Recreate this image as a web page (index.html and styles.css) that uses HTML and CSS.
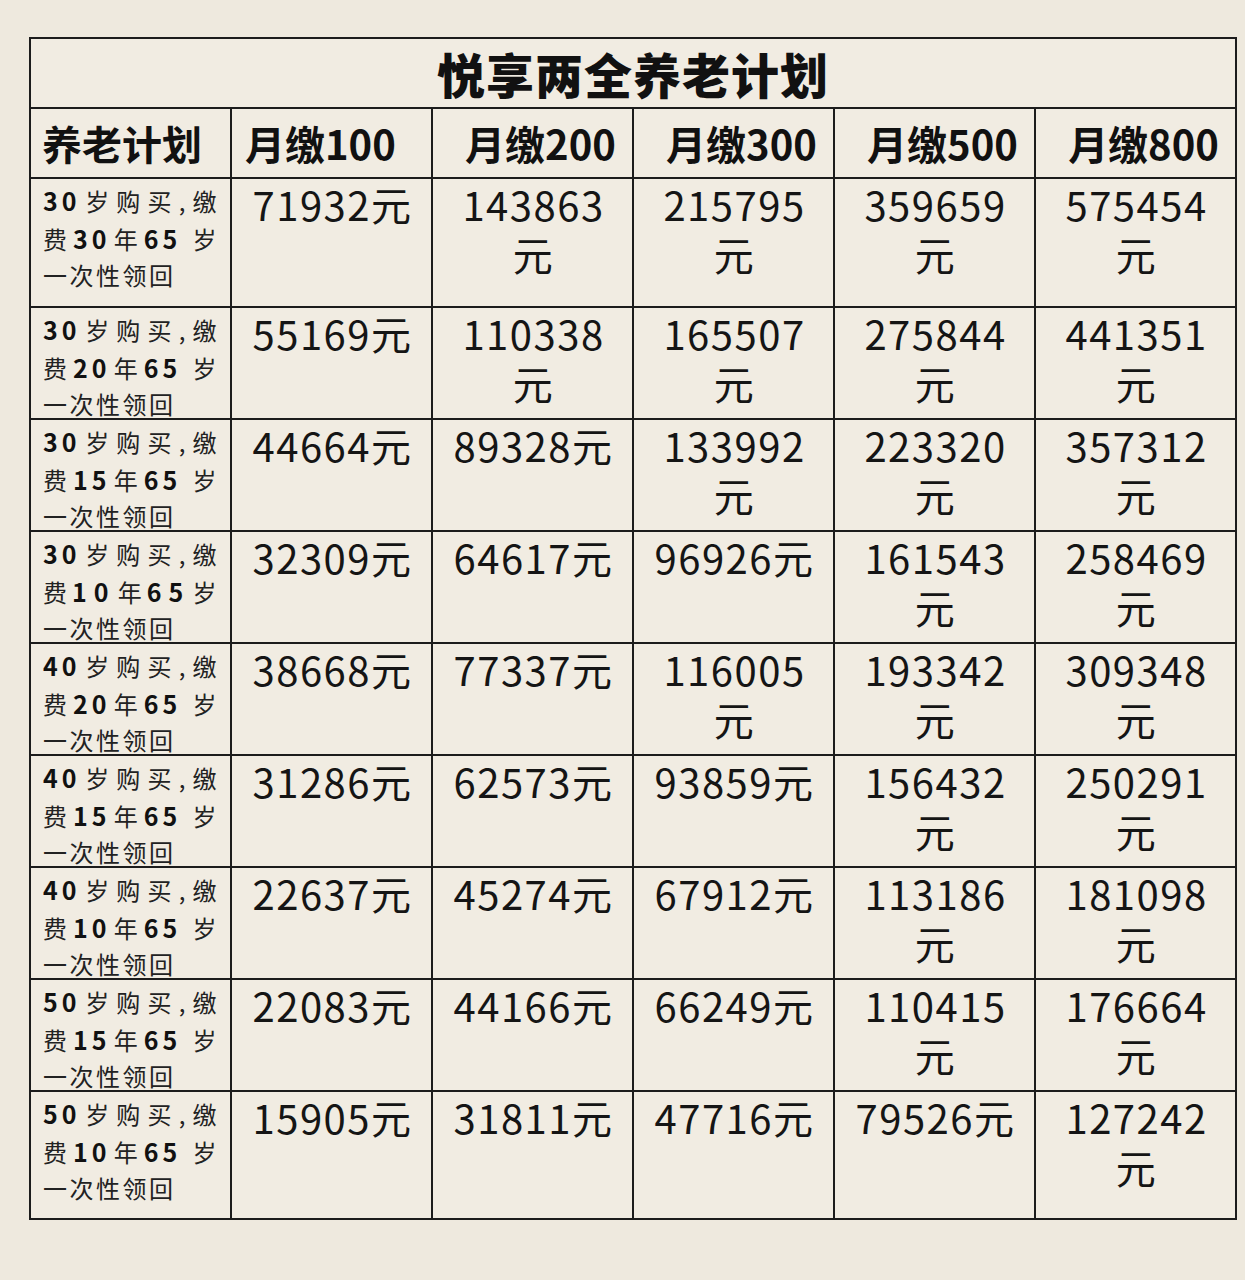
FILE: index.html
```html
<!DOCTYPE html>
<html lang="zh-CN">
<head>
<meta charset="utf-8">
<title>悦享两全养老计划</title>
<link rel="stylesheet" href="styles.css">
</head>
<body>
<table class="plan">
  <colgroup>
    <col class="c0"><col class="c"><col class="c"><col class="c"><col class="c"><col class="c">
  </colgroup>
  <tr class="r-title"><th colspan="6" class="title">悦享两全养老计划</th></tr>
  <tr class="r-head">
    <th class="h0">养老计划</th>
    <th class="h1">月缴100</th>
    <th class="h">月缴200</th>
    <th class="h">月缴300</th>
    <th class="h">月缴500</th>
    <th class="h">月缴800</th>
  </tr>
  <tr class="r-first">
    <td class="lab"><div class="ln j"><b>30</b>岁购买,缴</div><div class="ln j">费<b>30</b>年<b>65</b> 岁</div><div class="ln end">一次性领回</div></td>
    <td class="v">71932元</td><td class="v">143863元</td><td class="v">215795元</td><td class="v">359659元</td><td class="v">575454元</td>
  </tr>
  <tr class="r">
    <td class="lab"><div class="ln j"><b>30</b>岁购买,缴</div><div class="ln j">费<b>20</b>年<b>65</b> 岁</div><div class="ln end">一次性领回</div></td>
    <td class="v">55169元</td><td class="v">110338元</td><td class="v">165507元</td><td class="v">275844元</td><td class="v">441351元</td>
  </tr>
  <tr class="r">
    <td class="lab"><div class="ln j"><b>30</b>岁购买,缴</div><div class="ln j">费<b>15</b>年<b>65</b> 岁</div><div class="ln end">一次性领回</div></td>
    <td class="v">44664元</td><td class="v">89328元</td><td class="v">133992元</td><td class="v">223320元</td><td class="v">357312元</td>
  </tr>
  <tr class="r">
    <td class="lab"><div class="ln j"><b>30</b>岁购买,缴</div><div class="ln j">费<b class="w">10</b>年<b class="w">65</b>岁</div><div class="ln end">一次性领回</div></td>
    <td class="v">32309元</td><td class="v">64617元</td><td class="v">96926元</td><td class="v">161543元</td><td class="v">258469元</td>
  </tr>
  <tr class="r">
    <td class="lab"><div class="ln j"><b>40</b>岁购买,缴</div><div class="ln j">费<b>20</b>年<b>65</b> 岁</div><div class="ln end">一次性领回</div></td>
    <td class="v">38668元</td><td class="v">77337元</td><td class="v">116005元</td><td class="v">193342元</td><td class="v">309348元</td>
  </tr>
  <tr class="r">
    <td class="lab"><div class="ln j"><b>40</b>岁购买,缴</div><div class="ln j">费<b>15</b>年<b>65</b> 岁</div><div class="ln end">一次性领回</div></td>
    <td class="v">31286元</td><td class="v">62573元</td><td class="v">93859元</td><td class="v">156432元</td><td class="v">250291元</td>
  </tr>
  <tr class="r">
    <td class="lab"><div class="ln j"><b>40</b>岁购买,缴</div><div class="ln j">费<b>10</b>年<b>65</b> 岁</div><div class="ln end">一次性领回</div></td>
    <td class="v">22637元</td><td class="v">45274元</td><td class="v">67912元</td><td class="v">113186元</td><td class="v">181098元</td>
  </tr>
  <tr class="r">
    <td class="lab"><div class="ln j"><b>50</b>岁购买,缴</div><div class="ln j">费<b>15</b>年<b>65</b> 岁</div><div class="ln end">一次性领回</div></td>
    <td class="v">22083元</td><td class="v">44166元</td><td class="v">66249元</td><td class="v">110415元</td><td class="v">176664元</td>
  </tr>
  <tr class="r-last">
    <td class="lab"><div class="ln j"><b>50</b>岁购买,缴</div><div class="ln j">费<b>10</b>年<b>65</b> 岁</div><div class="ln end">一次性领回</div></td>
    <td class="v">15905元</td><td class="v">31811元</td><td class="v">47716元</td><td class="v">79526元</td><td class="v">127242元</td>
  </tr>
</table>
</body>
</html>
```
FILE: styles.css
```css
html, body {
  margin: 0;
  padding: 0;
  background: #eee9de;
}
body {
  font-family: "Noto Sans CJK SC", "Noto Sans", sans-serif;
  color: #161616;
  padding: 37px 0 0 29px;
  height: 1243px;
  overflow: hidden;
}
.plan {
  border-collapse: collapse;
  table-layout: fixed;
  width: 1206px;
  background: #f1ece2;
}
.c0 { width: 201px; }
.c { width: 201px; }
.plan th, .plan td {
  border: 2px solid #1c1c1c;
  padding: 0;
}
.r-title { height: 70px; }
.title {
  font-size: 48px;
  font-weight: 900;
  letter-spacing: 1px;
  text-align: center;
  vertical-align: middle;
  color: #111;
  line-height: 1;
}
.r-head { height: 70px; }
.r-head th {
  font-size: 40px;
  font-weight: 700;
  vertical-align: middle;
  color: #111;
  line-height: 1;
}
.h0 { text-align: left; padding-left: 11px !important; }
.h1 { text-align: left; padding-left: 13px !important; }
.h { text-align: center; padding-left: 16px !important; }
.r-first { height: 129px; }
.r { height: 112px; }
.r-last { height: 128px; }
.lab {
  vertical-align: top;
  padding: 3px 11px 0 12px !important;
  font-size: 24px;
  line-height: 36.5px;
  letter-spacing: 2.5px;
  color: #222;
}
.ln { white-space: nowrap; }
.ln.end { height: 28px; }
.j {
  text-align: justify;
  text-align-last: justify;
}
.lab b {
  font-weight: 700;
  font-size: 25px;
  letter-spacing: 4px;
  color: #111;
}
.lab b.w { letter-spacing: 7px; }
.v {
  vertical-align: top;
  text-align: center;
  font-size: 40px;
  font-weight: 400;
  letter-spacing: 1.5px;
  line-height: 50px;
  padding: 0 12px 0 14px !important;
  color: #151515;
}
```
